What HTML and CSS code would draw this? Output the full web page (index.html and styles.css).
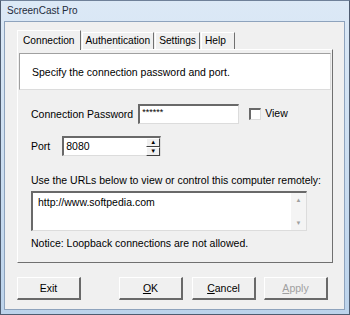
FILE: index.html
```html
<!DOCTYPE html>
<html lang="en">
<head>
  <meta charset="UTF-8">
  <title>ScreenCast Pro</title>
  <link rel="stylesheet" href="styles.css">
</head>
<body>
  <div class="window">
    <div class="titlebar">ScreenCast Pro</div>
    <div class="client">
      <div class="tabs">
        <div class="tab active">Connection</div>
        <div class="tab">Authentication</div>
        <div class="tab">Settings</div>
        <div class="tab help">Help</div>
      </div>
      <div class="panel">
        <div class="intro">Specify the connection password and port.</div>

        <div class="row pass-row">
          <span class="label">Connection Password</span>
          <div class="field pass">******</div>
          <span class="check"></span>
          <span class="check-label">View</span>
        </div>

        <div class="row port-row">
          <span class="label">Port</span>
          <div class="field port">
            <span class="port-value">8080</span>
            <span class="spin">
              <span class="spin-btn">&#9650;</span>
              <span class="spin-btn">&#9660;</span>
            </span>
          </div>
        </div>

        <p class="text urls-label">Use the URLs below to view or control this computer remotely:</p>
        <div class="field urls">
          <span class="urls-value">http://www.softpedia.com</span>
          <span class="scroll">
            <span class="arrow">&#9650;</span>
            <span class="arrow">&#9660;</span>
          </span>
        </div>
        <p class="text notice">Notice: Loopback connections are not allowed.</p>
      </div>

      <div class="buttons">
        <button class="btn exit">Exit</button>
        <button class="btn ok"><u>O</u>K</button>
        <button class="btn cancel"><u>C</u>ancel</button>
        <button class="btn apply" disabled><u>A</u>pply</button>
      </div>
    </div>
  </div>
</body>
</html>
```

FILE: styles.css
```css
body {
  margin: 0;
  width: 350px;
  height: 315px;
  overflow: hidden;
  font-family: "Liberation Sans", Arial, sans-serif;
  font-size: 10.5px;
  color: #000;
  background-color: #ffffff;
}
.window {
  width: 350px;
  height: 315px;
  box-sizing: border-box;
  border: 1px solid #4e5c70;
  border-top-color: #6f8199;
  background: linear-gradient(#dce9f6, #bcd3eb);
  padding: 0 4px 4px 3px;
  display: flex;
  flex-direction: column;
}
.titlebar {
  height: 20px;
  line-height: 20px;
  padding-left: 3px;
  font-size: 10px;
  color: #1e2b3b;
}
.client {
  flex: 1;
  background-color: #f0f0f0;
  border: 1px solid #8ea3bd;
  padding: 8px 12px 0 12px;
  display: flex;
  flex-direction: column;
}
.tabs {
  display: flex;
  align-items: flex-end;
  height: 19px;
}
.tab {
  height: 16px;
  line-height: 16px;
  padding: 0 3px;
  font-size: 10.2px;
  border: 1px solid #fff;
  border-right-color: #707070;
  border-bottom: none;
  background-color: #f0f0f0;
  margin-right: 1px;
}
.tab.active {
  height: 19px;
  line-height: 19px;
  padding: 0 5px;
  margin-bottom: -1px;
  position: relative;
  z-index: 1;
}
.tab.help {
  padding-right: 8px;
}
.panel {
  height: 214px;
  flex-shrink: 0;
  box-sizing: border-box;
  border: 1px solid #fff;
  border-right-color: #707070;
  border-bottom-color: #707070;
  width: 316px;
  padding: 3px 1px 0 1px;
}
.intro {
  height: 37px;
  box-sizing: border-box;
  background-color: #fff;
  border: 1px solid #a0a0a0;
  border-right-color: #dcdcdc;
  border-bottom-color: #dcdcdc;
  padding: 12px 0 0 12px;
}
.row {
  display: flex;
  align-items: center;
  padding-left: 12px;
}
.pass-row {
  margin-top: 14px;
}
.port-row {
  margin-top: 12px;
}
.field {
  box-sizing: border-box;
  background-color: #fff;
  border: 1px solid #dcdcdc;
  border-top: 2px solid #696969;
  border-left: 2px solid #696969;
}
.pass {
  width: 101px;
  height: 20px;
  margin-left: 5px;
  padding: 1px 0 0 2px;
  font-size: 9px;
}
.check {
  width: 12px;
  height: 12px;
  box-sizing: border-box;
  margin-left: 10px;
  background-color: #fff;
  border: 1px solid #dcdcdc;
  border-top: 2px solid #696969;
  border-left: 2px solid #696969;
}
.check-label {
  margin-left: 4px;
  margin-top: -3px;
}
.port {
  width: 99px;
  height: 20px;
  margin-left: 12px;
  display: flex;
  justify-content: space-between;
}
.port-value {
  padding: 2px 0 0 2px;
}
.spin {
  display: flex;
  flex-direction: column;
  width: 14px;
}
.spin-btn {
  flex: 1;
  font-size: 6px;
  line-height: 7px;
  text-align: center;
  background-color: #f0f0f0;
  border: 1px solid #fff;
  border-right-color: #404040;
  border-bottom-color: #404040;
}
.text {
  margin: 0;
  padding-left: 12px;
}
.urls-label {
  margin-top: 18px;
}
.urls {
  width: 276px;
  height: 40px;
  margin: 5px 0 0 12px;
  display: flex;
  justify-content: space-between;
}
.urls-value {
  padding: 3px 0 0 5px;
}
.scroll {
  width: 15px;
  display: flex;
  flex-direction: column;
  justify-content: space-between;
  background-color: #f4f4f4;
}
.arrow {
  font-size: 6px;
  color: #a0a0a0;
  text-align: center;
  line-height: 14px;
}
.notice {
  margin-top: 6px;
}
.buttons {
  display: flex;
  margin-top: 14px;
}
.btn {
  width: 64px;
  height: 23px;
  padding: 0;
  font-family: "Liberation Sans", Arial, sans-serif;
  font-size: 10.5px;
  color: #000;
  background-color: #f0f0f0;
  border: 1px solid #fff;
  border-right: 2px solid #696969;
  border-bottom: 2px solid #696969;
  border-radius: 0;
}
.ok {
  margin-left: 38px;
}
.cancel {
  margin-left: 9px;
}
.apply {
  margin-left: 8px;
  color: #a0a0a0;
}
```
